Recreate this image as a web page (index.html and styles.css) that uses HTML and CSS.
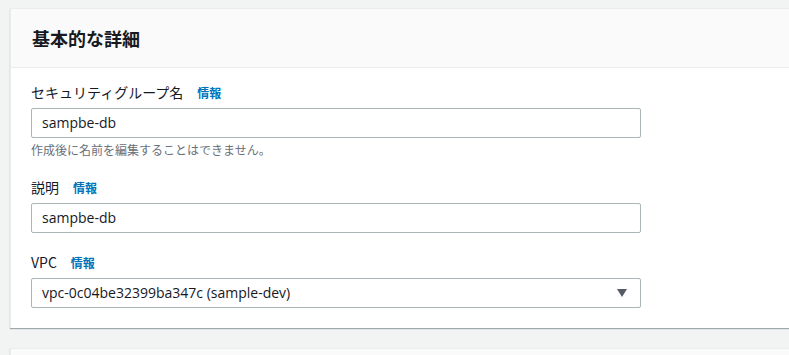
FILE: index.html
```html
<!DOCTYPE html>
<html lang="ja">
    <head>
        <meta charset="utf-8">
        <title>基本的な詳細</title>
        <link rel="stylesheet" href="styles.css">
    </head>
    <body>
        <div class="panel">
            <div class="panelHeader">
                <h2>基本的な詳細</h2>
            </div>
            <div class="panelBody">
                <div class="field">
                    <div class="fieldLabel">セキュリティグループ名<a class="info">情報</a></div>
                    <div class="textInput">sampbe-db</div>
                    <div class="hint">作成後に名前を編集することはできません。</div>
                </div>
                <div class="field">
                    <div class="fieldLabel">説明<a class="info">情報</a></div>
                    <div class="textInput">sampbe-db</div>
                </div>
                <div class="field">
                    <div class="fieldLabel">VPC<a class="info">情報</a></div>
                    <div class="textInput selectInput">
                        <span>vpc-0c04be32399ba347c (sample-dev)</span>
                        <span class="caret"></span>
                    </div>
                </div>
            </div>
        </div>
        <div class="panel nextPanel"></div>
    </body>
</html>
```

FILE: styles.css
```css
body {
 margin: 0;
 padding: 8px 0 0 10px;
 background-color: #f2f3f3;
 font-family: "Open Sans", "Noto Sans CJK JP", sans-serif;
 color: #16191f;
 overflow: hidden;
}

.panel {
 width: 800px;
 background-color: #ffffff;
 border-top: 1px solid #eaeded;
 border-left: 1px solid #eaeded;
 box-shadow: 0 1px 1px 0 rgba(0, 28, 36, 0.35);
}

.panelHeader {
 background-color: #fafafa;
 border-bottom: 1px solid #eaeded;
 height: 58px;
 padding: 0 21px;
 display: flex;
 align-items: center;
}

.panelHeader h2 {
 margin: 0;
 font-size: 18px;
 font-weight: bold;
 font-family: "Noto Sans CJK JP", sans-serif;
}

.panelBody {
 padding: 13px 20px 20px 20px;
}

.field {
 margin-bottom: 18px;
}
.field:last-child {margin-bottom: 0;}

.fieldLabel {
 display: flex;
 align-items: center;
 height: 22px;
 font-size: 14px;
 margin-bottom: 5px;
 font-family: "Noto Sans CJK JP", sans-serif;
 color: #16191f;
}

.info {
 color: #0073bb;
 font-size: 12px;
 font-weight: bold;
 margin-left: 14px;
 padding-top: 1px;
}

.textInput {
 box-sizing: border-box;
 width: 610px;
 height: 30px;
 border: 1px solid #aab7b8;
 border-radius: 2px;
 padding: 0 10px;
 font-size: 14px;
 line-height: 28px;
 color: #16191f;
}

.selectInput {
 display: flex;
 justify-content: space-between;
 align-items: center;
}

.caret {
 width: 0;
 height: 0;
 border-left: 5px solid transparent;
 border-right: 5px solid transparent;
 border-top: 8px solid #545b64;
 margin-right: 3px;
}

.hint {
 font-size: 12px;
 line-height: 16px;
 margin-top: 4px;
 color: #687078;
 font-family: "Noto Sans CJK JP", sans-serif;
}

.nextPanel {
 margin-top: 20px;
 height: 20px;
 background-color: #fafafa;
}
```
